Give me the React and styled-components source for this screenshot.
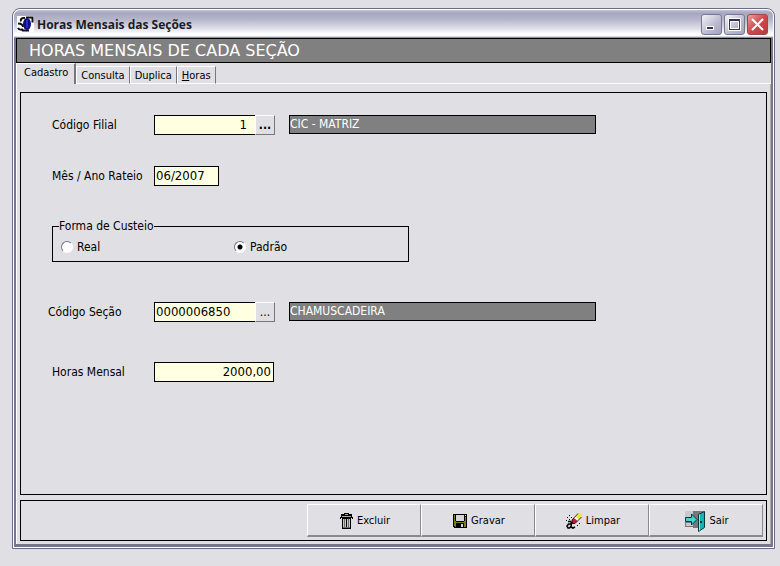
import React, { useState } from 'react';
import styled, { createGlobalStyle, css } from 'styled-components';

const TABS = [
    { id: 'cadastro', label: 'Cadastro' },
    { id: 'consulta', label: 'Consulta' },
    { id: 'duplica', label: 'Duplica' },
    { id: 'horas', label: <><u>H</u>oras</> },
];

const AppIcon = () => (
    <svg width="17" height="17" viewBox="0 0 17 17" aria-hidden="true">
        <path fill="#fff" d="M0 0h17v16H0z" />
        <path fill="none" stroke="#111" strokeWidth="2" d="M8 2C5 1.500 3 3 4 5.500M1 7.500c3 0 5 1 5 3.500M1 12c1 2 4 2 5 1M9 1.500h6.500v5M5 14.500h7" />
        <ellipse cx="10" cy="8" rx="4" ry="6" fill="#10107c" />
        <path stroke="#2a2ac8" strokeWidth="2" d="M10 4v8" />
    </svg>
);

const TrashIcon = () => (
    <svg width="13" height="16" viewBox="0 0 13 16" shapeRendering="crispEdges" aria-hidden="true">
        <path fill="#000" d="M4 0h5v1h3v3h1v2h-1V5h-1v11H2V5H1v1H0V4h1V1h3z" />
        <path fill="#a9a9a4" d="M5 1h3v1H5zM2 3h9v1H2z" />
        <path fill="#c8c8c6" d="M3 6h1v8H3zM5 6h1v8H5zM7 6h1v8H7zM9 6h1v8H9z" />
        <path fill="#6d6d6d" d="M3 14h7v1H3zM4 6h1v8H4zM8 6h1v8H8z" />
    </svg>
);

const DiskIcon = () => (
    <svg width="14" height="14" viewBox="0 0 14 14" shapeRendering="crispEdges" aria-hidden="true">
        <path fill="#000" d="M0 0h14v14H1v-1H0z" />
        <path fill="#7c7c22" d="M1 1h1v6h1v1h8V7h1V3h1v10h-2V9H3v4H2v-1H1z" />
        <path fill="#d6d6da" d="M3 1h8v6H3zM12 1h1v1h-1z" />
        <path fill="#000" d="M3 9h8v4H3z" />
        <path fill="#d6d6da" d="M8 10h2v3H8z" />
    </svg>
);

const EraserIcon = () => (
    <svg width="16" height="16" viewBox="0 0 16 16" aria-hidden="true">
        <path fill="#f3e534" d="M12 .5h3.500V4L13 6.500 9.500 3.500z" />
        <path fill="#fff" d="M9.500 3.500L13 6.500 11.500 8 8 5z" />
        <path fill="#c81830" d="M8 5l3.500 3L9 10.500H6V7z" />
        <path fill="none" stroke="#000" strokeWidth=".8" d="M12 .5L6 7v3.500h3L15.500 4" />
        <path fill="none" stroke="#000" strokeWidth="1.600" d="M2 8.500h2.500l1 1-.5 4.500 2 1 2-1M5 11H2.500l-1.500 2 1 2h1.500l2-2" />
        <path fill="#000" d="M3 2h1v1H3zM5 4h1v1H5zM1 4h1v1H1zM3 6h1v1H3zM0 7h1v1H0zM11 12h1v1h-1zM13 10h1v1h-1z" />
    </svg>
);

const DoorIcon = () => (
    <svg width="20" height="22" viewBox="0 0 20 22" aria-hidden="true">
        <path fill="#c9c8cb" d="M0 1h9v16H0z" />
        <path fill="#77777c" d="M8 1h11v17H8zM0 12h9v5H0z" />
        <path fill="#c9c8cb" d="M1 13h7v3H1z" />
        <path fill="#3fd6d4" stroke="#06383a" d="M.5 7.500h6v-3.500l5.500 5.500-5.500 5.500v-3.500h-6z" />
        <path fill="#17b3b4" stroke="#06383a" d="M13.500 4.500l6-3v16l-6 4z" />
        <path fill="#7df0ee" d="M14 5l1-1v16l-1 1z" />
        <path fill="#06383a" d="M15 11h2v2h-2z" />
    </svg>
);

const MinimizeGlyph = () => (
    <svg width="13" height="13" viewBox="0 0 13 13" aria-hidden="true">
        <path fill="#fff" d="M1 8h8v4H1z" />
        <path fill="#33334f" d="M2 9h6v2H2z" />
    </svg>
);

const MaximizeGlyph = () => (
    <svg width="13" height="13" viewBox="0 0 13 13" aria-hidden="true">
        <path fill="none" stroke="#fff" d="M.5 .5h12v12H.5z" />
        <path fill="#33334f" fillRule="evenodd" d="M1 1h11v11H1zM2 3v8h9V3z" />
        <path fill="none" stroke="#fff" d="M2.500 3.500h8v7h-8z" />
    </svg>
);

const CloseGlyph = () => (
    <svg width="13" height="13" viewBox="0 0 13 13" aria-hidden="true">
        <path stroke="#fff" strokeWidth="2" d="M1 1l11 11M12 1L1 12" />
    </svg>
);

export default function App() {
    const [activeTab, setActiveTab] = useState('cadastro');
    const [custeio, setCusteio] = useState('padrao');
    const [form, setForm] = useState({
        filial: '1',
        mesAno: '06/2007',
        secao: '0000006850',
        horas: '2000,00',
    });

    const handleChange = (evt) => {
        setForm({ ...form, [evt.target.name]: evt.target.value });
    }

    return (
        <Page>
            <GlobalStyle />
            <Window>
                <TitleBar>
                    <AppIcon />
                    <Title>Horas Mensais das Seções</Title>
                    <WindowButton type="button" aria-label="Minimizar"><MinimizeGlyph /></WindowButton>
                    <WindowButton type="button" aria-label="Maximizar"><MaximizeGlyph /></WindowButton>
                    <WindowButton type="button" aria-label="Fechar" $danger><CloseGlyph /></WindowButton>
                </TitleBar>
                <Client>
                    <Heading>HORAS MENSAIS DE CADA SEÇÃO</Heading>
                    <TabList role="tablist">
                        {TABS.map(tab => (
                            <Tab
                                key={tab.id}
                                type="button"
                                role="tab"
                                aria-selected={activeTab === tab.id}
                                $active={activeTab === tab.id}
                                onClick={() => setActiveTab(tab.id)}
                            >
                                {tab.label}
                            </Tab>
                        ))}
                    </TabList>
                    <TabPage>
                        <Panel>
                            <Row>
                                <Label htmlFor="filial">Código Filial</Label>
                                <Lookup>
                                    <Field id="filial" name="filial" value={form.filial} onChange={handleChange} $align="right" $lookup />
                                    <LookupButton type="button" aria-label="Procurar filial" $bold>...</LookupButton>
                                </Lookup>
                                <Description>CIC - MATRIZ</Description>
                            </Row>
                            <Row>
                                <Label htmlFor="mesAno">Mês / Ano Rateio</Label>
                                <Field id="mesAno" name="mesAno" value={form.mesAno} onChange={handleChange} $width={65} />
                            </Row>
                            <Group>
                                <legend>Forma de Custeio</legend>
                                <Option>
                                    <Radio name="custeio" checked={custeio === 'real'} onChange={() => setCusteio('real')} />
                                    Real
                                </Option>
                                <Option>
                                    <Radio name="custeio" checked={custeio === 'padrao'} onChange={() => setCusteio('padrao')} />
                                    Padrão
                                </Option>
                            </Group>
                            <Row $loose>
                                <Label htmlFor="secao" $outdent>Código Seção</Label>
                                <Lookup>
                                    <Field id="secao" name="secao" value={form.secao} onChange={handleChange} $lookup />
                                    <LookupButton type="button" aria-label="Procurar seção">...</LookupButton>
                                </Lookup>
                                <Description>CHAMUSCADEIRA</Description>
                            </Row>
                            <Row $loose>
                                <Label htmlFor="horas">Horas Mensal</Label>
                                <Field id="horas" name="horas" value={form.horas} onChange={handleChange} $align="right" />
                            </Row>
                        </Panel>
                        <Actions>
                            <ActionButton type="button"><TrashIcon />Excluir</ActionButton>
                            <ActionButton type="button"><DiskIcon />Gravar</ActionButton>
                            <ActionButton type="button"><EraserIcon />Limpar</ActionButton>
                            <ActionButton type="button"><DoorIcon />Sair</ActionButton>
                        </Actions>
                    </TabPage>
                </Client>
            </Window>
        </Page>
    );
};

const GlobalStyle = createGlobalStyle`
  * {
    box-sizing: border-box;
  }
  body {
    margin: 0;
    background: #e0dfe3;
    color: #000;
    font-family: "DejaVu Sans Condensed", "Noto Sans", sans-serif;
    font-size: 12px;
    line-height: 16px;
  }
  button, input {
    font: inherit;
    color: inherit;
  }
  svg {
    flex: none;
  }
`

const Page = styled.main`
  display: flex;
  min-height: 100vh;
  padding: 8px 5px 17px 12px;
`

const Window = styled.section`
  display: flex;
  flex-direction: column;
  flex: 1;
  min-width: 0;
  padding: 1px;
  border: 1px solid #6b6b86;
  border-radius: 8px 8px 0 0;
  background: #fff;
`

const TitleBar = styled.header`
  display: flex;
  align-items: center;
  gap: 2px;
  height: 28px;
  padding: 2px 5px 0 3px;
  border-bottom: 1px solid #8f8fa6;
  border-radius: 6px 6px 0 0;
  background: linear-gradient(#c4c4d6 0, #a6a6bf 3px, #b4b4c9 9px, #dcdce6 18px, #fff 24px, #fff 26px, #b5b5c6 27px);
`

const Title = styled.h1`
  flex: 1;
  margin: 0;
  padding-left: 1px;
  color: #1c1c24;
  font-family: "Open Sans", "Noto Sans", sans-serif;
  font-size: 12px;
  font-weight: 700;
`

const WindowButton = styled.button`
  display: flex;
  align-items: center;
  justify-content: center;
  width: 21px;
  height: 21px;
  padding: 0;
  border: 1px solid #77778f;
  border-radius: 3px;
  background: linear-gradient(135deg, #f4f4fa, #b9b9cf 60%, #a3a3bd);
  ${props => props.$danger && css`
    border-color: #a2444c;
    background: linear-gradient(135deg, #eba0a0, #d0484c 50%, #b93a40);
  `}
`

const Client = styled.div`
  display: flex;
  flex-direction: column;
  flex: 1;
  border: solid #77778c;
  border-width: 0 2px 3px;
  background: #e0dfe3;
`

const Heading = styled.h2`
  height: 25px;
  margin: 0;
  padding: 0 12px;
  border: 1px solid #000;
  background: #808080;
  color: #fff;
  font-family: "DejaVu Sans", "Noto Sans", sans-serif;
  font-size: 16px;
  font-weight: 400;
  line-height: 23px;
`

const TabList = styled.div`
  display: flex;
  align-items: flex-end;
  height: 21px;
  &::after {
    content: '';
    flex: 1;
    border-bottom: 1px solid #fff;
  }
`

const Tab = styled.button`
  height: 18px;
  padding: 1px 4px 0;
  border: solid #fff;
  border-width: 1px 0 1px 1px;
  border-right: 1px solid #77777b;
  background: none;
  font-size: 11px;
  line-height: 15px;
  ${props => props.$active && css`
    height: 21px;
    padding: 0 6px 3px 7px;
    border-bottom: 0;
    border-right-width: 2px;
  `}
`

const TabPage = styled.div`
  display: flex;
  flex-direction: column;
  flex: 1;
  gap: 5px;
  padding: 8px 3px 3px;
  border-left: 1px solid #fff;
  border-right: 1px solid #a9a9b2;
`

const Panel = styled.form`
  flex: 1;
  padding: 22px 31px;
  border: 1px solid #000;
`

const Row = styled.div`
  display: flex;
  height: 20px;
  & + & {
    margin-top: 31px;
  }
  && {
    ${props => props.$loose && 'margin-top: 40px;'}
  }
`

const Label = styled.label`
  width: 102px;
  padding-top: 2px;
  ${props => props.$outdent && css`
    width: 106px;
    margin-left: -4px;
  `}
`

const Field = styled.input`
  width: ${props => props.$width || 120}px;
  height: 20px;
  padding: 0 2px 2px 1px;
  border: 1px solid #000;
  border-radius: 0;
  background: #ffffe1;
  font-size: 13px;
  text-align: ${props => props.$align || 'left'};
  outline: none;
  ${props => props.$lookup && css`
    flex: 1;
    width: auto;
    min-width: 0;
    padding-right: 8px;
    border-right: 0;
  `}
`

const Lookup = styled.div`
  display: flex;
  width: 121px;
  margin-right: 14px;
`

const LookupButton = styled.button`
  width: 20px;
  padding: 0;
  border: 1px solid;
  border-color: #fff #77777b #77777b #fff;
  background: #e0dfe3;
  font-weight: ${props => (props.$bold ? 700 : 400)};
`

const Description = styled.output`
  flex: 0 1 307px;
  height: 19px;
  border: 1px solid #000;
  background: #808080;
  color: #fff;
`

const Group = styled.fieldset`
  display: grid;
  grid-template-columns: 173px 1fr;
  width: 357px;
  height: 45px;
  margin: 31px 0 0;
  padding: 4px 8px;
  border: 1px solid #000;
  legend {
    margin-left: -2px;
    padding: 0;
    line-height: 18px;
  }
`

const Option = styled.label`
  display: flex;
  align-items: center;
  gap: 4px;
  height: 16px;
`

const Radio = styled.input.attrs({ type: 'radio' })`
  appearance: none;
  width: 12px;
  height: 12px;
  margin: 0;
  border: 1px solid;
  border-color: #77777b #fff #fff #77777b;
  border-radius: 50%;
  background: #fff;
  &:checked {
    background: radial-gradient(circle, #000 2px, #fff 3px);
  }
`

const Actions = styled.footer`
  display: flex;
  justify-content: flex-end;
  height: 41px;
  padding: 3px;
  border: 1px solid #000;
`

const ActionButton = styled.button`
  display: flex;
  align-items: center;
  justify-content: center;
  gap: 4px;
  width: 114px;
  padding: 2px 0 0 2px;
  border: solid;
  border-width: 1px 1px 2px;
  border-color: #fff #8a8a8e #8a8a8e #fff;
  background: #e0dfe3;
  font-size: 11px;
`
